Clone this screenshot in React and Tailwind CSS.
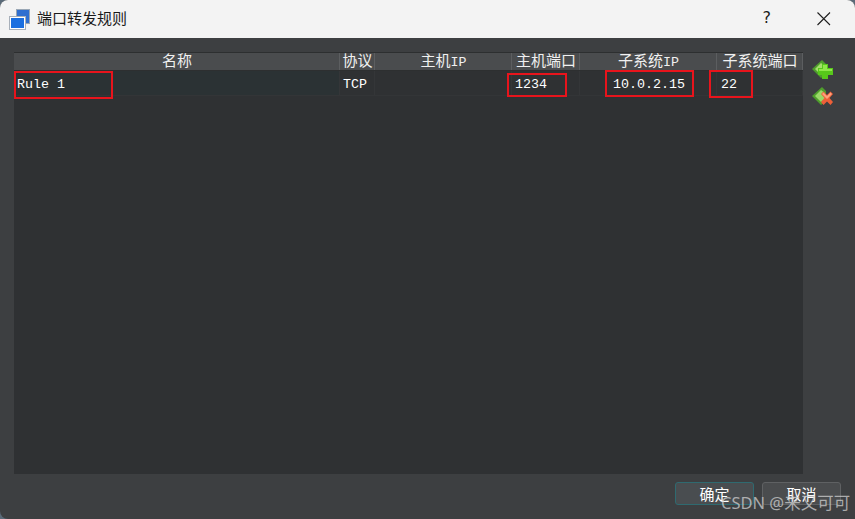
const columns = [
  { title: "名称", width: 326 },
  { title: "协议", width: 35 },
  { title: "主机", latin: "IP", width: 137 },
  { title: "主机端口", width: 68 },
  { title: "子系统", latin: "IP", width: 137 },
  { title: "子系统端口", width: 86 },
];

const cells = [
  { text: "Rule 1", width: 326, box: "left-0 top-0 w-[99px] h-[28px]", bg: "bg-[#2b3234]" },
  { text: "TCP", width: 35 },
  { text: "", width: 137 },
  { text: "1234", width: 68, box: "left-[-5px] top-[2px] w-[60px] h-[24px]" },
  { text: "10.0.2.15", width: 137, box: "left-[25px] top-[-1px] w-[89px] h-[27px]", pad: "pl-[33px]" },
  { text: "22", width: 86, box: "left-[-8px] top-[-1px] w-[44px] h-[28px]", pad: "pl-[4px]" },
];

function AddIcon() {
  return (
    <svg width="22" height="20" viewBox="0 0 22 20">
      <path d="M10 0 L0 9 L9 18 L14 14 L14 4 Z" fill="#4f9e2c" />
      <path d="M9 3 L3 9 L9 15 L13 12 L13 6 Z" fill="#a4dd6c" />
      <path d="M10 4 h6 v4 h5 v7 h-5 v4 h-6 v-4 h-4 v-7 h4 Z" fill="#57c81a" />
      <path d="M11 5 h4 v4 h5 v2 h-13 v-2 h4 Z" fill="#8fe84a" />
    </svg>
  );
}

function RemoveIcon() {
  return (
    <svg width="22" height="21" viewBox="0 0 22 21">
      <path d="M10 0 L0 9 L9 18 L14 14 L14 4 Z" fill="#4f9e2c" />
      <path d="M9 3 L3 9 L9 15 L13 12 L13 6 Z" fill="#9ad868" />
      <path d="M9 7 L11.5 4.5 L15 8 L18.5 4.5 L21 7 L17.5 11 L21 15 L18.5 18 L15 14.5 L11.5 18 L9 15 L12.5 11 Z" fill="#ee5f38" />
      <path d="M10 7 L11.5 5.5 L15 9 L18.5 5.5 L20 7 L15 12 Z" fill="#ffa07c" />
    </svg>
  );
}

function WindowIcon() {
  return (
    <svg width="21" height="21" viewBox="0 0 21 21">
      <rect x="7.5" y="0.5" width="13" height="14" fill="#2f6fd0" stroke="#9aa7b5" />
      <rect x="0.5" y="7.5" width="16" height="13" fill="#fff" stroke="#a8b0ba" />
      <rect x="2" y="9" width="13" height="10" fill="#1b6fe0" />
    </svg>
  );
}

export default function App() {
  return (
    <div className="w-[855px] h-[519px] bg-[#5a6a78] overflow-hidden" style={{ fontFamily: "'Liberation Mono', 'Noto Sans CJK SC', monospace" }}>
      <div className="w-[855px] h-[519px] rounded-t-lg rounded-bl-lg bg-[#3d3f41] flex flex-col relative">
        <div className="h-[38px] shrink-0 bg-[#f3f3f3] rounded-t-lg flex items-center pl-[9px] text-[#1a1a1a]">
          <WindowIcon />
          <span className="ml-[7px] text-[15px] mt-[-1px]" style={{ fontFamily: "'Noto Sans CJK SC', sans-serif" }}>端口转发规则</span>
          <span className="ml-auto mr-[45px] text-[16px] mt-[-2px]" style={{ fontFamily: "'DejaVu Sans', sans-serif" }}>?</span>
          <svg className="mr-[23px]" width="16" height="16" viewBox="0 0 16 16">
            <path d="M1.5 1.5 L14 14 M14 1.5 L1.5 14" stroke="#1f1f1f" strokeWidth="1.1" fill="none" />
          </svg>
        </div>

        <div className="flex-1 flex pt-[14px] pl-[14px]">
          <div className="w-[789px] h-[422px] bg-[#2f3133] flex flex-col">
            <div className="flex h-[19px] border-y border-y-[#2d2f30] bg-[#4a4c4e] text-[#f0f0f0] text-[15px] leading-[19px]">
              {columns.map((c) => (
                <div key={c.title} className="text-center pl-[1px] border-r border-[#5c5e60] whitespace-nowrap overflow-hidden" style={{ width: c.width }}>
                  {c.title}
                  {c.latin && <span className="text-[13.33px]">{c.latin}</span>}
                </div>
              ))}
            </div>
            <div className="flex h-[25px] border-b border-[#333537] text-white text-[13.33px] leading-[28px]">
              {cells.map((c, i) => (
                <div key={i} className={`relative border-r border-[#343638] ${c.bg || ""} ${c.pad || "pl-[3px]"}`} style={{ width: c.width }}>
                  {c.text}
                  {c.box && <div className={`absolute border-2 border-[#e8141c] ${c.box}`} />}
                </div>
              ))}
            </div>
          </div>
          <div className="ml-[9px] pt-[8px] flex flex-col gap-[7px]">
            <AddIcon />
            <RemoveIcon />
          </div>
        </div>

        <div className="flex justify-end gap-[8px] pr-[14px] pb-[14px] pt-[1px] text-white text-[15px]" style={{ fontFamily: "'Noto Sans CJK SC', sans-serif" }}>
          <button className="w-[79px] h-[23px] rounded-[3px] border border-[#2f6a70] bg-[#494d50] leading-[20px]">确定</button>
          <button className="w-[79px] h-[23px] rounded-[3px] border border-[#5f6163] bg-[#4a4c4e] leading-[20px]">取消</button>
        </div>

        <span className="absolute left-[721px] top-[491px] text-[16.5px] text-[#d0d0d0]/75 whitespace-nowrap" style={{ fontFamily: "'Noto Sans', 'Noto Sans CJK SC', sans-serif" }}>CSDN @来又可可</span>
      </div>
    </div>
  );
}
